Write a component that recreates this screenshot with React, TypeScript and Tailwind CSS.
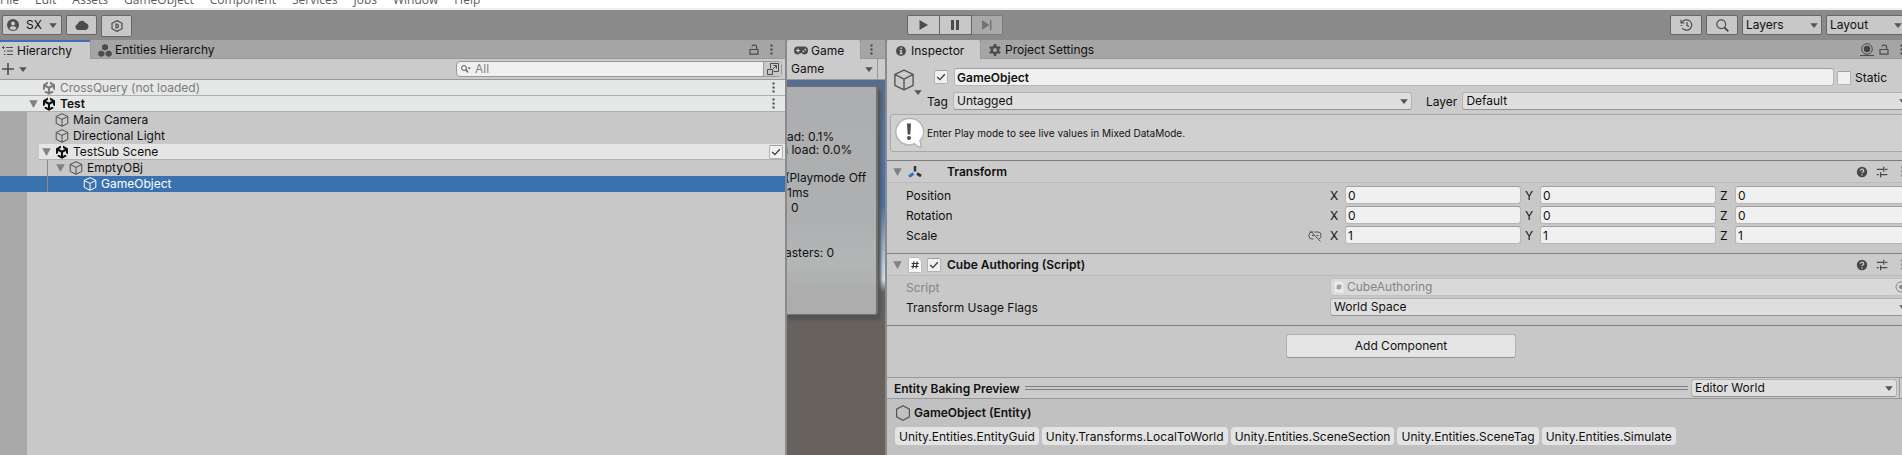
import React from 'react';

type IconProps = { className?: string };

const Caret = ({ className = '' }: IconProps) => (
  <svg viewBox="0 0 8 5" className={`h-[5px] w-2 shrink-0 fill-[#555] ${className}`} aria-hidden="true">
    <path d="M0.2 0.3h7.6L4 4.9z" />
  </svg>
);

const Foldout = ({ className = '' }: IconProps) => (
  <svg viewBox="0 0 9 8" className={`h-2 w-[9px] shrink-0 fill-[#818181] ${className}`} aria-hidden="true">
    <path d="M0.2 0.2h8.6L4.5 8z" />
  </svg>
);

const Dots = ({ className = '' }: IconProps) => (
  <svg viewBox="0 0 3 11" className={`h-[11px] w-[3px] shrink-0 fill-[#444] ${className}`} aria-hidden="true">
    <path d="M0.5 0.5h2v2h-2zM0.5 4.5h2v2h-2zM0.5 8.5h2v2h-2z" />
  </svg>
);

const Cube = ({ className = '' }: IconProps) => (
  <svg viewBox="0 0 14 14" className={`shrink-0 fill-none ${className}`} strokeLinejoin="round" aria-hidden="true">
    <path d="M7 0.7 12.8 3.4v7L7 13.3 1.2 10.4v-7zM1.4 3.6 7 6.4l5.6-2.8M7 6.4v6.6" />
  </svg>
);

const UnityLogo = ({ className = '' }: IconProps) => (
  <svg viewBox="0 0 14 14" className={`size-[14px] shrink-0 ${className}`} fill="currentColor" aria-hidden="true">
    <path d="M5.9 0.6v2.3L4 4l2.9 1.6L9.9 4 8 2.9V0.6l5 2.9v5.7l-2-1.1V5.9L8 7.6v3.3l2-1.1 2 1.1-5 2.9-5-2.9 2-1.1 2 1.1V7.6L3 5.9v2.2L1 9.2V3.5z" />
  </svg>
);

const Lock = () => (
  <svg viewBox="0 0 10 11" className="h-[11px] w-[10px] shrink-0 fill-none stroke-[#4c4c4c]" strokeWidth="1.2" aria-hidden="true">
    <path d="M1 5.5h8v4.7H1zM7.6 5.2V3a1.9 1.9 0 0 0-1.9-1.9H4.6A1.9 1.9 0 0 0 2.9 2.4" />
  </svg>
);

const Help = () => (
  <svg viewBox="0 0 12 12" className="size-3 shrink-0" aria-hidden="true">
    <circle cx="6" cy="6" r="5.2" fill="#484848" />
    <path d="M4.3 4.8a1.7 1.5 0 1 1 2.6 1.2c-.7.4-.9.6-.9 1.1M6 8.2v1.2" fill="none" stroke="#cbcbcb" strokeWidth="1.3" />
  </svg>
);

const Presets = () => (
  <svg viewBox="0 0 12 12" className="size-3 shrink-0 fill-none stroke-[#484848]" strokeWidth="1.2" aria-hidden="true">
    <path d="M0.8 3.3h6.4M9 3.3h2.4M7.8 0.8v5M0.8 8.7h2M5 8.7h6.4M4.6 6.2v5" />
  </svg>
);

function Check({ label, on = false, className = '' }: { label: string; on?: boolean; className?: string }) {
  return (
    <span className={`grid size-[14px] shrink-0 place-items-center ${className}`}>
      <input
        type="checkbox"
        aria-label={label}
        defaultChecked={on}
        className="peer col-start-1 row-start-1 size-[14px] appearance-none rounded-[2px] border border-[#b2b2b2] border-t-[#a0a0a0] bg-[#f0f0f0]"
      />
      <svg viewBox="0 0 10 8" className="pointer-events-none col-start-1 row-start-1 hidden h-2 w-[10px] fill-none stroke-[#3c3c3c] peer-checked:block" strokeWidth="1.3" aria-hidden="true">
        <path d="M1.2 4 3.9 6.6 8.8 1.2" />
      </svg>
    </span>
  );
}

function Drop({ label, value, className = '', box = '' }: { label: string; value: string; className?: string; box?: string }) {
  return (
    <span className={`relative flex min-w-0 items-center ${className}`}>
      <select aria-label={label} className={`w-full appearance-none truncate pr-4 pl-[3px] ${box}`}>
        <option>{value}</option>
      </select>
      <Caret className="pointer-events-none absolute right-1" />
    </span>
  );
}

const popup = 'h-[18px] rounded-[3px] border border-[#b2b2b2] border-b-[#939393] bg-[#dfdfdf]';
const toolDrop = 'h-5 rounded-[2px] border border-[#6b6560] bg-[#c8c8c8]';
const toolButton = 'flex items-center justify-center border border-[#6b6560] bg-[#c8c8c8]';

const menus = ['File', 'Edit', 'Assets', 'GameObject', 'Component', 'Services', 'Jobs', 'Window', 'Help'];

function MenuBar() {
  return (
    <nav className="flex h-[10px] items-end overflow-hidden border-b-2 border-[#f0f0f0] bg-white font-['Open_Sans',sans-serif] text-[12px] leading-[16px] text-[#5c5c5c]">
      <div className="flex gap-4">
        {menus.map((m) => (
          <button key={m} className="block">{m}</button>
        ))}
      </div>
    </nav>
  );
}

function Toolbar() {
  return (
    <header className="-mr-[7px] grid h-[30px] grid-cols-[1fr_auto_1fr] items-start bg-[#8a8a8a] pt-[5px]">
      <div className="flex items-start gap-1 pl-[2px]">
        <button className={`${toolButton} h-5 w-[60px] gap-[7px] rounded-[2px]`}>
          <svg viewBox="0 0 12 12" className="size-3 shrink-0" aria-hidden="true">
            <circle cx="6" cy="6" r="6" fill="#4c4c4c" />
            <circle cx="6" cy="4.4" r="2" fill="#c8c8c8" />
            <path d="M2.4 9.2C3.2 7.6 4.4 7.2 6 7.2s2.8.4 3.6 2C8.7 10.3 7.4 10.900 6 10.900S3.300 10.300 2.400 9.200z" fill="#c8c8c8" />
          </svg>
          SX
          <Caret />
        </button>
        <button aria-label="Cloud" className={`${toolButton} h-5 w-[31px] rounded-[2px]`}>
          <svg viewBox="0 0 14 10" className="h-[10px] w-[14px] fill-[#4c4c4c]" aria-hidden="true">
            <path d="M3.200 10A3 3 0 0 1 2.600 4.100 4.300 4.300 0 0 1 10.600 3.100 3.500 3.500 0 0 1 10.500 10z" />
          </svg>
        </button>
        <button aria-label="Packages" className={`${toolButton} h-[22px] w-[31px] rounded-[2px]`}>
          <svg viewBox="0 0 12 12" className="size-3 fill-none stroke-[#4c4c4c]" strokeWidth="1.200" aria-hidden="true">
            <path d="M6 0.600 11 3.300v5.400L6 11.400 1 8.700V3.300z" />
            <path d="M5 4.200h1L7.300 5v2L6 7.800H5z" />
          </svg>
        </button>
      </div>
      <div className="flex">
        <button aria-label="Play" className={`${toolButton} h-5 w-[33px] rounded-l-[2px]`}>
          <svg viewBox="0 0 9 10" className="h-[10px] w-[9px] fill-[#4c4c4c]" aria-hidden="true"><path d="M0.500 0 9 5 0.500 10z" /></svg>
        </button>
        <button aria-label="Pause" className={`${toolButton} h-5 w-8 border-l-0`}>
          <svg viewBox="0 0 8 10" className="h-[10px] w-2 fill-[#4c4c4c]" aria-hidden="true"><path d="M0 0h3v10H0zM5 0h3v10H5z" /></svg>
        </button>
        <button aria-label="Step" disabled className="flex h-5 w-[31px] items-center justify-center rounded-r-[2px] border border-l-0 border-[#7d7a77] bg-[#a9a9a9]">
          <svg viewBox="0 0 10 10" className="h-[10px] w-[10px] fill-[#747474]" aria-hidden="true"><path d="M0 0 7.500 5 0 10zM8 0h1.500v10H8z" /></svg>
        </button>
      </div>
      <div className="flex justify-end gap-1 pr-[3px]">
        <button aria-label="Undo history" className={`${toolButton} h-5 w-8 rounded-[2px]`}>
          <svg viewBox="0 0 13 12" className="h-3 w-[13px] fill-none stroke-[#4c4c4c]" strokeWidth="1.200" aria-hidden="true">
            <path d="M2 3.500A5.200 5.200 0 1 1 2.300 9M1 0.800v3.200h3.400M7 3v3.300l2 1.300M0.600 6.500h1.600" />
          </svg>
        </button>
        <button aria-label="Search" className={`${toolButton} h-5 w-8 rounded-[2px]`}>
          <svg viewBox="0 0 13 13" className="size-[13px] fill-none stroke-[#4c4c4c]" aria-hidden="true">
            <circle cx="5.200" cy="5.200" r="4.400" strokeWidth="1.200" />
            <path d="M8.500 8.500 12.300 12.300" strokeWidth="1.800" />
          </svg>
        </button>
        <Drop label="Layers" value="Layers" className="w-20" box={toolDrop} />
        <Drop label="Layout" value="Layout" className="w-20" box={toolDrop} />
      </div>
    </header>
  );
}

type Node = { name: string; kind: 'scene' | 'object'; open?: boolean; selected?: boolean };

function NodeContent({ name, kind, open, selected }: Node) {
  return (
    <>
      <span className="flex w-[13px] shrink-0">{open && <Foldout />}</span>
      {kind === 'scene' ? <UnityLogo /> : <Cube className={selected ? 'size-[14px] stroke-white' : 'size-[14px] stroke-[#4c4c4c]'} />}
      <span className="ml-[4px]">{name}</span>
    </>
  );
}

function Hierarchy() {
  return (
    <section className="flex min-w-0 flex-col overflow-hidden bg-[#c8c8c8]">
      <div className="flex h-[19px] shrink-0 items-stretch border-b border-[#999] bg-[#a5a5a5]">
        <button className="-mb-px flex w-[90px] items-center gap-1 border-t-2 border-[#3a72b0] bg-[#cbcbcb] pl-[2px]">
          <svg viewBox="0 0 11 10" className="h-[10px] w-[11px] shrink-0 fill-none stroke-[#4c4c4c]" aria-hidden="true">
            <path d="M4 1.500h7M5 5h6M5 8.500h6M0 1.500h2.500M1.500 0v3M2 5h1.500M2 8.500h1.500" />
          </svg>
          Hierarchy
        </button>
        <button className="flex items-center gap-[3px] border-l border-[#999] pt-[2px] pl-[7px]">
          <svg viewBox="0 0 14 13" className="h-[13px] w-[14px] shrink-0 fill-[#4c4c4c]" aria-hidden="true">
            <path d="M7 0 10 1.600v3.300L7 6.500 4 4.900V1.600zM3.300 6.400l3.100 1.600v3.300L3.300 13 0.300 11.300V8zM10.700 6.400l3 1.600v3.300L10.700 13 7.600 11.300V8z" />
          </svg>
          Entities Hierarchy
        </button>
        <div className="ml-auto flex items-center gap-[11px] pr-3">
          <button aria-label="Lock"><Lock /></button>
          <button aria-label="Hierarchy menu"><Dots /></button>
        </div>
      </div>
      <div className="flex h-[21px] shrink-0 items-center border-b border-[#999] bg-[#cbcbcb] pr-[3px] pl-[2px]">
        <button aria-label="Create" className="flex items-center gap-[5px]">
          <svg viewBox="0 0 12 12" className="size-3 stroke-[#4c4c4c]" strokeWidth="1.600" aria-hidden="true"><path d="M6 0v12M0 6h12" /></svg>
          <Caret />
        </button>
        <div className="ml-auto flex h-4 w-[42%] max-w-[326px] items-center rounded-[4px] border border-[#999] bg-[#f0f0f0]">
          <svg viewBox="0 0 10 8" className="ml-1 h-2 w-[10px] shrink-0 fill-none stroke-[#555]" aria-hidden="true">
            <circle cx="3" cy="3" r="2.400" />
            <path d="M4.800 4.800 7 7.400" strokeWidth="1.400" />
            <path d="M6.600 2.500h3.200L8.200 4.500z" fill="#555" stroke="none" />
          </svg>
          <input aria-label="Search hierarchy" placeholder="All" className="ml-1 h-[14px] min-w-0 flex-1 bg-transparent outline-none placeholder:text-[#858585]" />
          <button aria-label="Open in search" className="flex h-full w-[18px] items-center justify-center rounded-r-[3px] border-l border-[#999] bg-[#c8c8c8]">
            <svg viewBox="0 0 12 12" className="size-3 fill-none stroke-[#4c4c4c]" aria-hidden="true">
              <path d="M3.500 5.500v-5h8v8h-5M0.500 6.500h5v5h-5zM5.500 6.500l3.800-3.800M6.500 2.500h3v3" />
            </svg>
          </button>
        </div>
      </div>
      <ul className="flex flex-1 flex-col bg-[linear-gradient(to_right,#a9a9a9_27px,#c8c8c8_27px)]">
        <li className="flex h-4 items-center border-b border-[#b0b0b0] bg-[#e6e8e7] pr-[10px] pl-[29px] text-[#7b7b7b]">
          <NodeContent name="CrossQuery (not loaded)" kind="scene" />
          <Dots className="ml-auto" />
        </li>
        <li className="flex h-4 items-center border-b border-[#b0b0b0] bg-[#e6e8e7] pr-[10px] pl-[29px] font-semibold">
          <NodeContent name="Test" kind="scene" open />
          <Dots className="ml-auto" />
        </li>
        <li className="flex h-4 items-center pl-[42px]"><NodeContent name="Main Camera" kind="object" /></li>
        <li className="flex h-4 items-center pl-[42px]"><NodeContent name="Directional Light" kind="object" /></li>
        <li className="ml-[39px] flex h-4 items-center border-b border-[#b0b0b0] bg-[#e4e5e4] pr-[2px] pl-[3px]">
          <NodeContent name="TestSub Scene" kind="scene" open />
          <Check label="Open sub scene" on className="ml-auto" />
        </li>
        <li className="flex h-4 items-center pl-[47px]">
          <span className="h-4 w-[9px] border-l border-[#8a8a8a]" />
          <NodeContent name="EmptyOBj" kind="object" open />
        </li>
        <li className="flex h-4 items-center bg-[#3a72b0] pl-[47px] text-white">
          <span className="h-4 w-[23px] border-l border-[#8a8a8a]" />
          <NodeContent name="GameObject" kind="object" selected />
        </li>
      </ul>
    </section>
  );
}

function GameView() {
  return (
    <section className="flex min-w-0 flex-col overflow-hidden bg-[#67625e]">
      <div className="flex h-[19px] shrink-0 border-b border-[#999] bg-[#a5a5a5]">
        <button className="-mb-px flex flex-[74] items-center gap-[3px] rounded-t-[2px] bg-[#cbcbcb] pt-[2px] pl-[7px]">
          <svg viewBox="0 0 14 9" className="h-[9px] w-[14px] shrink-0" aria-hidden="true">
            <path d="M4 0.500h6a4 4 0 0 1 0 8C8.800 8.500 8.400 7 7 7S5.200 8.500 4 8.500a4 4 0 0 1 0-8z" fill="#4c4c4c" />
            <path d="M4 2.500v4M2 4.500h4" stroke="#cbcbcb" strokeWidth="1.200" />
            <circle cx="9.400" cy="5.400" r="0.900" fill="#cbcbcb" /><circle cx="11.200" cy="3.600" r="0.900" fill="#cbcbcb" />
          </svg>
          Game
        </button>
        <button aria-label="Game menu" className="flex flex-[24] items-center justify-center border-l border-[#999] pr-[3px]"><Dots /></button>
      </div>
      <div className="flex h-[21px] shrink-0 items-center border-b border-[#999] bg-[#cbcbcb] pr-[7px] pl-px">
        <Drop label="View" value="Game" className="flex-1 border-r border-[#999]" box="h-5" />
      </div>
      <div className="flex flex-1 flex-col bg-[linear-gradient(to_bottom,#586d8e_0px,#4f74a4_60px,#4673ae_125px,#7f9bb8_150px,#bcd0e2_185px,#d5dde2_200px,#67625e_212px)] pr-[7px]">
        <div className="mt-[6px] h-[229px] overflow-hidden rounded-r-[3px] border-t border-r-2 border-b border-[#707070] bg-[linear-gradient(to_bottom,#adaeb0_0px,#adafb1_130px,#b3b6b6_175px,#adadad_205px,#adadad)] whitespace-nowrap shadow-[2px_4px_3px_1px_#555452]">
          <div className="-ml-[2px] flex flex-col pt-[42px] leading-[15px]">
            <p className="-mb-[2px] pl-[2px]">ad: 0.1%</p>
            <p className="-ml-1">n load: 0.0%</p>
            <p className="mt-[13px]">(Playmode Off</p>
            <p className="pl-[2px]">1ms</p>
            <p className="pl-[6px]">0</p>
            <p className="mt-[30px]">asters: 0</p>
          </div>
        </div>
      </div>
    </section>
  );
}

const field = 'h-[18px] min-w-0 flex-1 rounded-[3px] border border-[#b7b7b7] border-t-[#a0a0a0] bg-[#f0f0f0] px-[2px]';
const propertyRow = 'grid h-[18px] grid-cols-[424fr_581fr] items-center pr-1 pl-[19px]';
const headerBar = 'flex h-[23px] shrink-0 items-center border-t border-b border-t-[#7f7f7f] border-b-[#bababa] bg-[#cbcbcb] pl-[6px] font-semibold';

function HeaderActions({ name }: { name: string }) {
  return (
    <div className="ml-auto flex items-center gap-2 pr-[11px]">
      <button aria-label={`${name} help`}><Help /></button>
      <button aria-label={`${name} presets`}><Presets /></button>
      <button aria-label={`${name} menu`} className="pl-[5px]"><Dots /></button>
    </div>
  );
}

const vectors: { name: string; value: string }[] = [
  { name: 'Position', value: '0' },
  { name: 'Rotation', value: '0' },
  { name: 'Scale', value: '1' },
];

const components = [
  'Unity.Entities.EntityGuid',
  'Unity.Transforms.LocalToWorld',
  'Unity.Entities.SceneSection',
  'Unity.Entities.SceneTag',
  'Unity.Entities.Simulate',
];

function Inspector() {
  return (
    <section className="min-w-0 overflow-hidden bg-[#c8c8c8]">
      <div className="-mr-[13px] flex h-full flex-col">
        <div className="flex h-[19px] shrink-0 border-b border-[#999] bg-[#a5a5a5]">
          <button className="-mb-px flex w-[93px] items-center gap-[5px] rounded-t-[2px] bg-[#cbcbcb] pt-[2px] pl-[9px]">
            <svg viewBox="0 0 10 10" className="size-[10px] shrink-0" aria-hidden="true">
              <circle cx="5" cy="5" r="5" fill="#4c4c4c" />
              <path d="M4.300 1.500h1.600v1.500H4.300zM3.600 4h2.300v3.300h.8v1H3.500v-1h.8V5h-.7z" fill="#cbcbcb" />
            </svg>
            Inspector
          </button>
          <button className="flex items-center gap-1 border-l border-[#999] pt-[2px] pl-2">
            <svg viewBox="0 0 12 12" className="size-3 shrink-0" aria-hidden="true">
              <circle cx="6" cy="6" r="3.200" fill="none" stroke="#4c4c4c" strokeWidth="2.400" />
              <path d="M6 0v2.500M6 9.500V12M0.800 3l2.200 1.200M9 7.800 11.200 9M0.800 9 3 7.800M9 4.200 11.200 3" stroke="#4c4c4c" strokeWidth="2.400" />
            </svg>
            Project Settings
          </button>
          <div className="ml-auto flex items-center pr-3">
            <button aria-label="Data mode" className="mr-[5px] border-b border-[#4c4c4c]">
              <svg viewBox="0 0 14 12" className="h-3 w-[14px]" aria-hidden="true">
                <circle cx="7" cy="6" r="5.300" fill="none" stroke="#4c4c4c" />
                <circle cx="7" cy="6" r="3.200" fill="#444" />
              </svg>
            </button>
            <button aria-label="Lock inspector" className="mr-[11px]"><Lock /></button>
            <button aria-label="Inspector menu"><Dots /></button>
          </div>
        </div>

        <div className="flex h-[101px] shrink-0 flex-col bg-[#cbcbcb] pt-[9px]">
          <div className="flex">
            <div className="flex w-[47px] shrink-0 items-start pt-px pl-[6px]">
              <Cube className="size-[22px] stroke-[#555] [stroke-width:0.9]" />
              <Caret className="mt-[21px] -ml-px" />
            </div>
            <div className="flex min-w-0 flex-1 flex-col gap-[6px]">
              <div className="flex items-center">
                <Check label="Active" on className="mr-[6px]" />
                <input aria-label="Name" defaultValue="GameObject" className={`${field} font-semibold`} />
                <label className="flex w-[81px] shrink-0 items-center gap-1 pt-px pl-[3px]">
                  <Check label="Static" />
                  Static
                  <Caret className="ml-3" />
                </label>
              </div>
              <div className="-ml-[7px] grid grid-cols-[484fr_484fr] items-center gap-[14px] pr-1">
                <label className="flex items-center gap-[5px]"><span className="pt-[2px]">Tag</span><Drop label="Tag" value="Untagged" className="flex-1" box={popup} /></label>
                <label className="flex items-center gap-[5px]"><span className="pt-[2px]">Layer</span><Drop label="Layer" value="Default" className="flex-1" box={popup} /></label>
              </div>
            </div>
          </div>
          <div className="mt-1 ml-[3px] flex h-[38px] items-center gap-[2px] rounded-[3px] border border-[#a9a9a9] bg-[#d0d0d0] pl-1 text-[10px]">
            <svg viewBox="0 0 30 32" className="h-8 w-[30px] shrink-0" aria-hidden="true">
              <path d="M14 1.500a13.200 13.200 0 1 0 5.500 25.200c1.500 1.700 3.800 3.200 6.900 3.600l-1.400-6.700A13.200 13.200 0 0 0 14 1.500z" fill="#fff" stroke="#b5b5b5" strokeWidth="1.500" />
              <path d="M12 6.500h4l-.7 11h-2.600z" fill="#4c4c4c" />
              <circle cx="14" cy="21" r="2" fill="#4c4c4c" />
            </svg>
            Enter Play mode to see live values in Mixed DataMode.
          </div>
        </div>

        <div className={headerBar}>
          <Foldout />
          <svg viewBox="0 0 14 14" className="ml-[6px] size-[14px]" aria-hidden="true">
            <path d="M7 1v5.500" stroke="#333" strokeWidth="2.500" />
            <path d="M9 8.500 13 11" stroke="#333" strokeWidth="2.800" />
            <path d="M5.500 8.500 1 11.500" stroke="#2f6fc0" strokeWidth="2.800" />
          </svg>
          <span className="ml-[25px]">Transform</span>
          <HeaderActions name="Transform" />
        </div>
        <div className="flex h-[70px] shrink-0 flex-col gap-[2px] pt-[3px]">
          {vectors.map((v) => (
            <div key={v.name} className={propertyRow}>
              <div className="flex items-center justify-between pt-[2px] pr-[8px]">
                {v.name}
                {v.name === 'Scale' && (
                  <button aria-label="Constrain proportions">
                    <svg viewBox="0 0 14 12" className="h-3 w-[14px] fill-none stroke-[#555]" aria-hidden="true">
                      <path d="M5.500 2H4a3 3 0 0 0-3 3v1a3 3 0 0 0 3 3h1.500M6.500 2H10a3 3 0 0 1 3 3v1a3 3 0 0 1-2 2.800M4 5.500h2M8.500 5.500h2M2 0.500 12.500 11.500" />
                    </svg>
                  </button>
                )}
              </div>
              <div className="grid grid-cols-3 gap-1">
                {['X', 'Y', 'Z'].map((axis) => (
                  <label key={axis} className="flex items-center">
                    <span className="w-[15px] pt-[2px]">{axis}</span>
                    <input aria-label={`${v.name} ${axis}`} defaultValue={v.value} className={field} />
                  </label>
                ))}
              </div>
            </div>
          ))}
        </div>

        <div className={headerBar}>
          <Foldout />
          <svg viewBox="0 0 14 16" className="ml-[6px] h-4 w-[14px]" aria-hidden="true">
            <path d="M1.500 0.500H10L13.500 4v10.500a1 1 0 0 1-1 1h-11a1 1 0 0 1-1-1v-13a1 1 0 0 1 1-1z" fill="#fafafa" stroke="#bbb" />
            <path d="M6 4.500 4.800 11.500M9.300 4.500 8.100 11.500M3.600 6.500h7.200M3.200 9.500h7.200" stroke="#333" strokeWidth="1.200" />
          </svg>
          <Check label="Enabled" on className="ml-[5px]" />
          <span className="ml-[6px]">Cube Authoring (Script)</span>
          <HeaderActions name="Cube Authoring" />
        </div>
        <div className="flex h-[49px] shrink-0 flex-col gap-[2px] pt-[2px]">
          <div className={`${propertyRow} text-[#858585]`}>
            <span className="pt-[2px]">Script</span>
            <span className="flex h-[18px] items-center gap-[3px] rounded-[3px] border border-[#c0c0c0] bg-[#d9d9d9] pr-[3px] pl-[3px]">
              <svg viewBox="0 0 10 12" className="h-3 w-[10px]" aria-hidden="true">
                <path d="M0.500 0.500H7.500L9.500 2.500v9h-9z" fill="#ececec" />
                <path d="M4.300 3.500 3.600 8.500M6.400 3.500 5.700 8.500M2.700 5h4.800M2.500 7h4.800" stroke="#888" />
              </svg>
              CubeAuthoring
              <svg viewBox="0 0 12 12" className="ml-auto size-3 fill-none stroke-[#888]" aria-hidden="true">
                <circle cx="6" cy="6" r="5" /><circle cx="6" cy="6" r="1.500" fill="#888" />
              </svg>
            </span>
          </div>
          <div className={propertyRow}>
            <span className="pt-[2px]">Transform Usage Flags</span>
            <Drop label="Transform Usage Flags" value="World Space" box={popup} />
          </div>
        </div>

        <div className="flex h-[52px] shrink-0 items-start justify-center border-t border-[#7f7f7f] pt-2">
          <button className="h-6 w-[230px] rounded-[3px] border border-[#b2b2b2] border-b-[#939393] bg-[#e4e4e4]">Add Component</button>
        </div>

        <div className="flex h-[22px] shrink-0 items-center border-t border-b border-[#999] bg-[#cbcbcb] pl-[7px] font-semibold">
          <span className="pt-px">Entity Baking Preview</span>
          <span className="mr-[3px] ml-[5px] h-1 flex-1 border-t border-b border-[#7f7f7f]" />
          <Drop label="World" value="Editor World" className="w-[206px] font-normal" box={popup} />
          <span className="ml-[2px] h-full w-4 border-l border-[#999]" />
        </div>
        <div className="flex-1 bg-[#c1c1c1] pl-2">
          <div className="mt-[5px] flex h-[18px] items-center gap-[3px] font-semibold">
            <svg viewBox="0 0 16 16" className="size-4 fill-none stroke-[#555]" strokeWidth="1.200" aria-hidden="true">
              <path d="M8 0.700 14.400 4.200v7.600L8 15.300 1.600 11.800V4.200z" />
            </svg>
            GameObject (Entity)
          </div>
          <ul className="mt-[5px] flex gap-[3px] whitespace-nowrap">
            {components.map((c) => (
              <li key={c} className="h-[18px] rounded-[4px] bg-[#e4e4e4] px-1 pt-px leading-[18px]">{c}</li>
            ))}
          </ul>
        </div>
      </div>
    </section>
  );
}

export default function App() {
  return (
    <div className="flex min-h-screen flex-col overflow-hidden bg-[#8a8a8a] font-[Inter,sans-serif] text-[12px] leading-[16px] text-[#101010]">
      <MenuBar />
      <Toolbar />
      <main className="grid flex-1 grid-cols-[785fr_98fr_1015fr] gap-[2px]">
        <Hierarchy />
        <GameView />
        <Inspector />
      </main>
    </div>
  );
}
